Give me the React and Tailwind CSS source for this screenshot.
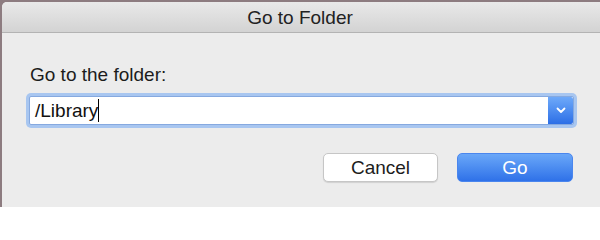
import React from "react";

const font = { fontFamily: '"Liberation Sans", Arial, sans-serif' };

const App = () => {
  return (
    <div
      className="w-[600px] h-[207px] flex flex-col bg-[#8d7c80] overflow-hidden"
      style={font}
    >
      <div className="flex-1 flex flex-col mt-[2px] ml-[2px] bg-[#ececec] rounded-tl-[5px] overflow-hidden">
        {/* title bar */}
        <div className="h-[31px] flex items-center justify-center bg-gradient-to-b from-[#e9e9e9] to-[#d3d3d3] border-b border-[#b3b3b3] -ml-[2px]">
          <span className="text-[19px] text-[#222] leading-none">Go to Folder</span>
        </div>

        {/* body */}
        <div className="flex flex-col pl-[24px] pr-[23px]">
          <label className="mt-[31px] text-[19px] leading-[22px] text-[#1c1c1c] pl-[4px]">
            Go to the folder:
          </label>

          <div className="mt-[7px] p-[3px] rounded-[5px] bg-[#a8c6f0]">
            <div className="flex h-[29px] bg-white border border-[#86a9df] rounded-[2px]">
              <div className="flex-1 flex items-center pl-[5px]">
                <span className="text-[19px] leading-none text-[#111]">/Library</span>
                <span className="w-px h-[23px] bg-black"></span>
              </div>
              <div className="w-[25px] flex items-center justify-center bg-gradient-to-b from-[#6ea9f9] to-[#2c6ee6] rounded-r-[2px]">
                <svg width="10" height="7" viewBox="0 0 10 7" fill="none">
                  <path
                    d="M1.5 1.5 L5 5 L8.5 1.5"
                    stroke="white"
                    strokeWidth="1.8"
                    strokeLinecap="round"
                    strokeLinejoin="round"
                  />
                </svg>
              </div>
            </div>
          </div>

          <div className="mt-[25px] flex justify-end gap-[19px] pr-[4px]">
            <button className="w-[115px] h-[29px] bg-white border border-[#c6c6c6] rounded-[5px] shadow-[0_1px_1px_rgba(0,0,0,0.12)] text-[19px] text-[#1c1c1c]">
              Cancel
            </button>
            <button className="w-[116px] h-[29px] rounded-[5px] bg-gradient-to-b from-[#6aa7f8] to-[#2f71e8] border border-[#4a86ee] text-[19px] text-white">
              Go
            </button>
          </div>
        </div>
      </div>
    </div>
  );
};

export default App;
